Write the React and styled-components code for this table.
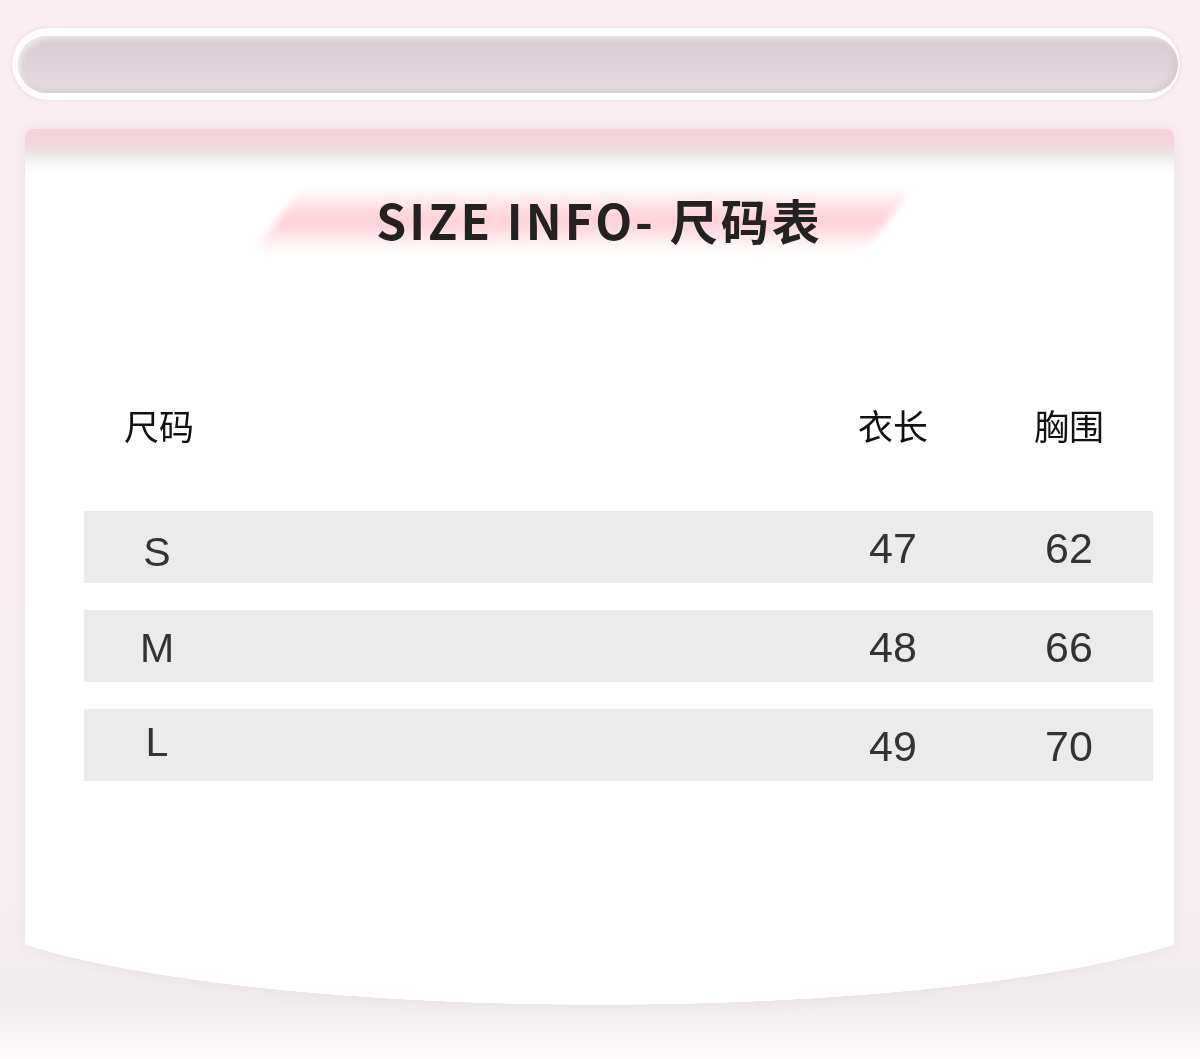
import React from "react";
import styled, { createGlobalStyle } from "styled-components";

const GlobalStyle = createGlobalStyle`
  html, body { margin: 0; padding: 0; }
  body {
    font-family: "Noto Sans CJK SC", "Noto Sans", sans-serif;
    background: #f9eef2;
  }
`;

const Page = styled.div`
  box-sizing: border-box;
  width: 1200px;
  height: 1059px;
  overflow: hidden;
  padding: 28px 20px 0 12px;
  display: flex;
  flex-direction: column;
  background: linear-gradient(
    180deg,
    #f9eef2 0px,
    #f7eef1 880px,
    #f4eef0 950px,
    #efebec 1000px,
    #f8f4f5 1035px,
    #fcf9fa 1059px
  );
`;

const TopBar = styled.div`
  box-sizing: border-box;
  height: 72px;
  border-radius: 36px;
  background: #fffefe;
  padding: 8px 2px 7px 6px;
  display: flex;
  box-shadow: 0 0 3px 1px rgba(240, 215, 225, 0.9);
`;

const TopBarInner = styled.div`
  flex: 1;
  border-radius: 30px;
  background: linear-gradient(180deg, #d8ccd2 0%, #ddd2d7 45%, #e4dadf 100%);
  box-shadow: inset 3px 3px 5px rgba(255, 255, 255, 0.5),
    inset -3px -2px 6px rgba(190, 170, 180, 0.35);
`;

const Card = styled.div`
  margin: 29px 6px 0 13px;
  display: flex;
  flex-direction: column;
  filter: drop-shadow(0 0 6px rgba(215, 195, 205, 0.35));
`;

const CardBody = styled.div`
  box-sizing: border-box;
  height: 816px;
  border-radius: 8px 8px 0 0;
  background: linear-gradient(
    180deg,
    #f6d1d8 0px,
    #f4d5db 12px,
    #ece2e4 24px,
    #f7f4f5 34px,
    #ffffff 44px
  );
  padding: 60px 21px 0 59px;
  display: flex;
  flex-direction: column;
`;

const CardFoot = styled.div`
  height: 60px;
  background: radial-gradient(
    ellipse 664px 120px at 50% -60px,
    #ffffff 99.6%,
    rgba(255, 255, 255, 0) 100%
  );
`;

const TitleWrap = styled.div`
  position: relative;
  height: 60px;
  margin-left: -38px;
  display: flex;
  align-items: center;
  justify-content: center;
`;

const TitleGlow = styled.div`
  position: absolute;
  left: 232px;
  top: 2px;
  width: 610px;
  height: 58px;
  transform: skewX(-36deg);
  background: linear-gradient(
    180deg,
    rgba(255, 205, 212, 0.15) 0%,
    rgba(255, 196, 205, 0.85) 50%,
    rgba(255, 210, 218, 0.15) 100%
  );
  filter: blur(5px);
`;

const Title = styled.h1`
  position: relative;
  margin: 0;
  font-family: "Noto Sans CJK SC", "Noto Sans", sans-serif;
  font-weight: 700;
  font-size: 48px;
  letter-spacing: 3px;
  line-height: 1;
  color: #222222;
`;

const Table = styled.div`
  display: flex;
  flex-direction: column;
  margin-top: 145px;
`;

const Grid = styled.div`
  box-sizing: border-box;
  display: grid;
  grid-template-columns: 146px 1fr 192px 160px;
  padding-right: 4px;
  align-items: center;
`;

const HeadRow = styled(Grid)`
  height: 60px;
  margin-bottom: 57px;
`;

const HeadCell = styled.div`
  grid-column: ${(p) => p.$col};
  text-align: center;
  font-family: "Noto Sans CJK SC", "Noto Sans", sans-serif;
  font-size: 35px;
  font-weight: 400;
  color: #111111;
  padding-left: ${(p) => (p.$col === 1 ? "4px" : "0")};
`;

const Row = styled(Grid)`
  height: 72px;
  background: #ebebeb;
  & + & {
    margin-top: 27px;
  }
`;

const SizeCell = styled.div`
  grid-column: 1;
  text-align: center;
  font-family: "Liberation Sans", Arial, sans-serif;
  font-size: 41px;
  color: #333333;
  transform: translateY(${(p) => p.$dy}px);
`;

const NumCell = styled.div`
  grid-column: ${(p) => p.$col};
  text-align: center;
  font-family: "Liberation Sans", Arial, sans-serif;
  font-size: 43px;
  color: #333333;
  transform: translateY(1px);
`;

const rows = [
  { size: "S", len: 47, chest: 62, dy: 5 },
  { size: "M", len: 48, chest: 66, dy: 2 },
  { size: "L", len: 49, chest: 70, dy: -3 },
];

export default function App() {
  return (
    <>
      <GlobalStyle />
      <Page>
        <TopBar>
          <TopBarInner />
        </TopBar>
        <Card>
          <CardBody>
            <TitleWrap>
              <TitleGlow />
              <Title>SIZE INFO- 尺码表</Title>
            </TitleWrap>
            <Table>
              <HeadRow>
                <HeadCell $col={1}>尺码</HeadCell>
                <HeadCell $col={3}>衣长</HeadCell>
                <HeadCell $col={4}>胸围</HeadCell>
              </HeadRow>
              {rows.map((r) => (
                <Row key={r.size}>
                  <SizeCell $dy={r.dy}>{r.size}</SizeCell>
                  <NumCell $col={3}>{r.len}</NumCell>
                  <NumCell $col={4}>{r.chest}</NumCell>
                </Row>
              ))}
            </Table>
          </CardBody>
          <CardFoot />
        </Card>
      </Page>
    </>
  );
}
